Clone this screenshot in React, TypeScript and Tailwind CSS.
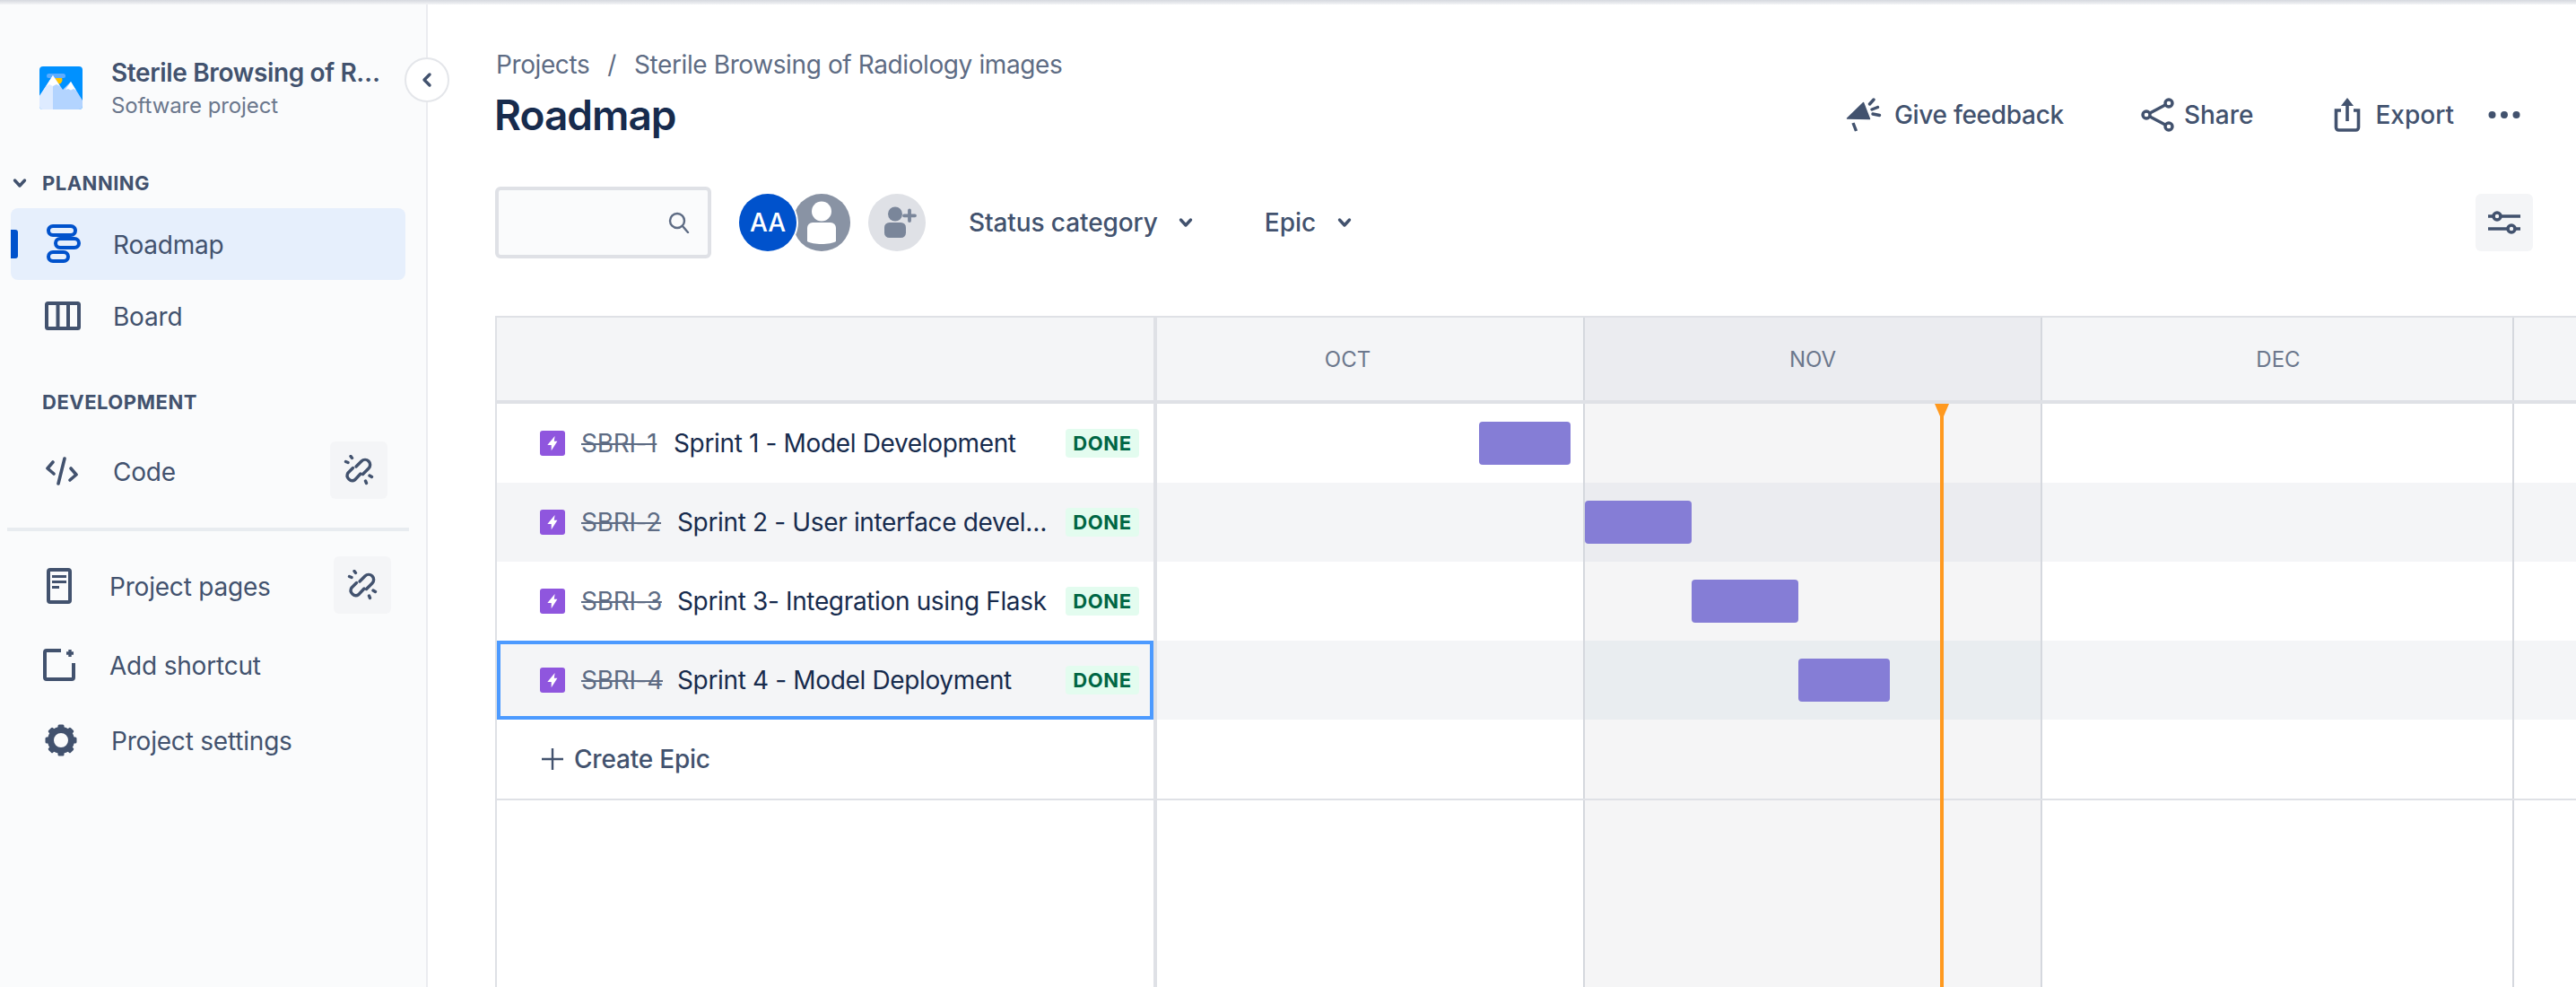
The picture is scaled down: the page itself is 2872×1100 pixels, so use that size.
import React from "react";

const Logo = () => (
  <svg width="48" height="48" viewBox="0 0 48 48" className="shrink-0">
    <rect width="48" height="48" rx="4" fill="#0091ff" />
    <circle cx="21" cy="15" r="4.5" fill="#ffc400" />
    <rect x="8" y="8" width="21" height="5" rx="2.5" fill="#5cadff" />
    <path d="M0 33 L15 10 L26 26 L35 17 L48 38 V44 A4 4 0 0 1 44 48 H4 A4 4 0 0 1 0 44 Z" fill="#b3d4ff" />
    <path d="M0 33 L15 10 V48 H4 A4 4 0 0 1 0 44 Z" fill="#deebff" />
    <path d="M7.5 22 L15 10 L23 22 L19 20 L15 22 L11 20 Z M29 26 L35 17 L41 27 L38 25 L35 26.5 L32 25 Z" fill="#ffffff" />
  </svg>
);
const RoadmapIcon = () => (
  <svg width="40" height="44" viewBox="0 0 40 44" fill="none" stroke="#0052cc" strokeWidth="4" className="shrink-0">
    <rect x="4" y="2" width="30" height="10" rx="5" />
    <rect x="12" y="16" width="26" height="10" rx="5" />
    <rect x="4" y="31" width="22" height="10" rx="5" />
  </svg>
);
const BoardIcon = () => (
  <svg width="40" height="32" viewBox="0 0 40 32" fill="none" stroke="#42526e" strokeWidth="4" className="shrink-0">
    <rect x="2" y="2" width="36" height="28" rx="1.5" />
    <path d="M14.5 2 V30 M26 2 V30" />
  </svg>
);
const CodeIcon = () => (
  <svg width="36" height="32" viewBox="0 0 36 32" fill="none" stroke="#42526e" strokeWidth="3.6" strokeLinecap="round" strokeLinejoin="round" className="shrink-0">
    <path d="M8 6 L2 13 L9 19 M28 13 L34 20 L27 26 M21 2 L14 30" />
  </svg>
);
const BrokenLink = () => (
  <svg width="34" height="34" viewBox="0 0 34 34" fill="none" stroke="#42526e" strokeWidth="3.4" strokeLinecap="round">
    <path d="M14 13 L20 7 A5.6 5.6 0 0 1 28 15 L21.5 21.5" />
    <path d="M10.5 14.5 L5 20 A5.6 5.6 0 0 0 13 27.5 L19 21" />
    <path d="M8 1.5 L9.5 3.5 M2.5 7.5 L5 8.5 M29 23 L31.5 24.5 M24.5 29 L25.5 31.5" />
  </svg>
);
const PageIcon = () => (
  <svg width="28" height="40" viewBox="0 0 28 40" fill="none" className="shrink-0">
    <rect x="2" y="2" width="24" height="36" rx="2" stroke="#42526e" strokeWidth="4" />
    <rect x="6" y="8" width="16" height="3" fill="#42526e" />
    <rect x="6" y="14" width="16" height="3" fill="#42526e" />
    <rect x="6" y="20" width="8" height="3" fill="#42526e" />
  </svg>
);
const ShortcutIcon = () => (
  <svg width="36" height="36" viewBox="0 0 36 36" fill="none" stroke="#42526e" className="shrink-0">
    <path d="M20 2 H4 A2 2 0 0 0 2 4 V32 A2 2 0 0 0 4 34 H32 A2 2 0 0 0 34 32 V16" strokeWidth="4" />
    <path d="M30 1 V9 M26 5 H34" strokeWidth="3.4" />
  </svg>
);
const GearIcon = () => (
  <svg width="36" height="36" viewBox="0 0 36 36" className="shrink-0">
    <circle cx="18" cy="18" r="11.5" fill="none" stroke="#42526e" strokeWidth="7" />
    {[0, 45, 90, 135, 180, 225, 270, 315].map((a) => (
      <rect key={a} x="14.5" y="0.5" width="7" height="6" rx="1.5" fill="#42526e" transform={`rotate(${a} 18 18)`} />
    ))}
  </svg>
);
const Megaphone = () => (
  <svg width="40" height="38" viewBox="0 0 40 38" fill="none" className="shrink-0">
    <path d="M1.5 23 L19.5 5.5 L26.5 23.5 Z" fill="#42526e" stroke="#42526e" strokeWidth="1.5" strokeLinejoin="round" />
    <path d="M8 28 L11.5 37" stroke="#42526e" strokeWidth="3.4" />
    <path d="M26.5 7 L31 2 M29 13 L35.5 10.5 M30 18 L37.5 19.5" stroke="#42526e" strokeWidth="3.4" strokeLinecap="round" />
  </svg>
);
const ShareIcon = () => (
  <svg width="38" height="38" viewBox="0 0 38 38" fill="none" stroke="#42526e" strokeWidth="3.4" className="shrink-0">
    <circle cx="31" cy="6" r="4" />
    <circle cx="6" cy="19" r="4" />
    <circle cx="31" cy="32" r="4" />
    <path d="M10 17 L27 8 M10 21 L27 30" />
  </svg>
);
const ExportIcon = () => (
  <svg width="30" height="38" viewBox="0 0 30 38" fill="none" stroke="#42526e" strokeWidth="3.6" className="shrink-0">
    <path d="M8 14 H2.5 V33 A3 3 0 0 0 5.5 36 H24.5 A3 3 0 0 0 27.5 33 V14 H22" />
    <path d="M15 26 V4" />
    <path d="M15 0 L22 9 H8 Z" fill="#42526e" stroke="none" />
  </svg>
);
const Dots = () => (
  <svg width="36" height="10" viewBox="0 0 36 10" fill="#42526e" className="shrink-0">
    <circle cx="4.5" cy="5" r="4" /><circle cx="18" cy="5" r="4" /><circle cx="31.5" cy="5" r="4" />
  </svg>
);
const SlidersIcon = () => (
  <svg width="36" height="28" viewBox="0 0 36 28" fill="none" stroke="#42526e" className="shrink-0">
    <path d="M0 7 H36 M0 21 H36" strokeWidth="3.6" />
    <circle cx="10" cy="7" r="4" fill="#f4f5f7" strokeWidth="3.6" />
    <circle cx="26" cy="21" r="4" fill="#f4f5f7" strokeWidth="3.6" />
  </svg>
);
const SearchIcon = () => (
  <svg width="24" height="24" viewBox="0 0 24 24" fill="none" stroke="#5e6c84" strokeWidth="2.4" strokeLinecap="round">
    <circle cx="10" cy="10" r="8" />
    <path d="M16 16 L22 23" />
  </svg>
);
const Chevron = ({ size = 16, color = "#42526e" }: { size?: number; color?: string }) => (
  <svg width={size} height={size} viewBox="0 0 16 16" fill="none" stroke={color} strokeWidth="3.4" strokeLinecap="round" strokeLinejoin="round" className="shrink-0">
    <path d="M2.5 5 L8 11 L13.5 5" />
  </svg>
);
const PersonAvatar = () => (
  <svg width="64" height="64" viewBox="0 0 64 64" className="shrink-0 -ml-[4px]">
    <circle cx="32" cy="32" r="32" fill="#8993a4" />
    <circle cx="32" cy="19.5" r="11" fill="#ffffff" />
    <path d="M16 38 A6 6 0 0 1 22 32 H42 A6 6 0 0 1 48 38 V53 C42 57 22 57 16 53 Z" fill="#ffffff" />
  </svg>
);
const AddPerson = () => (
  <svg width="64" height="64" viewBox="0 0 64 64" className="shrink-0">
    <circle cx="32" cy="32" r="32" fill="#dfe1e6" />
    <circle cx="30" cy="22.5" r="8" fill="#7a869a" />
    <rect x="18" y="32" width="24" height="17" rx="5.5" fill="#7a869a" />
    <path d="M46 18.5 V30 M40 24.3 H52" stroke="#7a869a" strokeWidth="3.8" strokeLinecap="round" />
  </svg>
);
const EpicIcon = () => (
  <svg width="28" height="28" viewBox="0 0 28 28" className="shrink-0">
    <rect width="28" height="28" rx="3" fill="#8f56de" />
    <path d="M16.6 6 L8.3 16 H12.7 V22.3 L19.4 11.7 H15.8 Z" fill="#ffffff" />
  </svg>
);

const NavItem = ({ icon, iconBox, label, action, className }: { icon: React.ReactNode; iconBox: string; label: string; action?: React.ReactNode; className: string }) => (
  <div className={`flex h-[80px] items-center ${className}`}>
    <div className={`flex items-center justify-center ${iconBox}`}>{icon}</div>
    <span className="mt-[2px] flex-1 text-[28px] tracking-[-0.2px] text-[#42526e]">{label}</span>
    {action}
  </div>
);
const LinkButton = ({ className }: { className: string }) => (
  <div className={`-mt-[2px] flex h-[64px] w-[64px] items-center justify-center rounded-[6px] bg-[#f4f5f7] ${className}`}>
    <BrokenLink />
  </div>
);

const epics = [
  { key: "SBRI-1", keyW: "w-[103px]", title: "Sprint 1 - Model Development", cell: 0, bar: "", alt: false, sel: false },
  { key: "SBRI-2", keyW: "w-[107px]", title: "Sprint 2 - User interface development", cell: 1, bar: "ml-0 w-[119px]", alt: true, sel: false },
  { key: "SBRI-3", keyW: "w-[107px]", title: "Sprint 3- Integration using Flask", cell: 1, bar: "ml-[119px] w-[119px]", alt: false, sel: false },
  { key: "SBRI-4", keyW: "w-[107px]", title: "Sprint 4 - Model Deployment", cell: 1, bar: "ml-[238px] w-[102px]", alt: true, sel: true },
];

const COLS = "grid grid-cols-[738px_477px_510px_526px_1fr]";

export default function App() {
  return (
    <div className="relative flex h-[1100px] w-[2872px] flex-col overflow-hidden bg-white font-['Inter',sans-serif]">
      <div className="h-[5px] shrink-0 bg-gradient-to-b from-[#d5d8de] to-[#f3f4f6]" />
      <div className="flex min-h-0 flex-1">
        <aside className="relative w-[477px] shrink-0 border-r-2 border-[#ebecf0] bg-[#fafbfc]">
          <div className="mt-[53px] flex h-[80px] items-center pl-[44px]">
            <Logo />
            <div className="ml-[32px] mt-[3px] w-[304px]">
              <div className="truncate text-[28px] font-semibold leading-[36px] tracking-[-0.35px] text-[#42526e]">Sterile Browsing of Radiology images</div>
              <div className="mt-[1px] text-[24px] leading-[36px] tracking-[-0.1px] text-[#6b778c]">Software project</div>
            </div>
          </div>
          <div className="absolute left-[451px] top-[59px] flex h-[50px] w-[50px] items-center justify-center rounded-full border-2 border-[#e4e6ea] bg-white">
            <svg width="16" height="18" viewBox="0 0 16 18" fill="none" stroke="#42526e" strokeWidth="3.4" strokeLinecap="round" strokeLinejoin="round"><path d="M11 3 L5 9 L11 15" /></svg>
          </div>
          <div className="mt-[50px] flex h-[32px] items-center pl-[14px] text-[22px] font-bold leading-[32px] tracking-[0.5px] text-[#42526e]">
            <Chevron size={16} />
            <span className="ml-[17px]">PLANNING</span>
          </div>
          <div className="relative ml-[12px] mt-[12px] flex h-[80px] w-[440px] items-center rounded-[8px] bg-[#e6effc]">
            <div className="absolute left-0 top-[24px] h-[32px] w-[8px] rounded-r-[3px] bg-[#0052cc]" />
            <div className="ml-[38px] flex w-[76px] items-center"><RoadmapIcon /></div>
            <span className="mt-[2px] text-[28px] tracking-[-0.2px] text-[#42526e]">Roadmap</span>
          </div>
          <NavItem className="" iconBox="ml-[50px] w-[76px] justify-start" icon={<BoardIcon />} label="Board" />
          <div className="mt-[40px] h-[32px] pl-[47px] text-[22px] font-bold leading-[32px] tracking-[0.5px] text-[#42526e]">DEVELOPMENT</div>
          <NavItem className="mt-[21px]" iconBox="ml-[51px] w-[75px] justify-start" icon={<CodeIcon />} label="Code" action={<LinkButton className="mr-[43px]" />} />
          <div className="ml-[8px] mt-[23px] h-[4px] w-[448px] bg-[#e8ecf0]" />
          <NavItem className="mt-[21px]" iconBox="ml-[52px] w-[70px] justify-start" icon={<PageIcon />} label="Project pages" action={<LinkButton className="mr-[39px]" />} />
          <NavItem className="mt-[8px]" iconBox="ml-[48px] w-[74px] justify-start" icon={<ShortcutIcon />} label="Add shortcut" />
          <NavItem className="mt-[4px]" iconBox="ml-[50px] w-[74px] justify-start" icon={<GearIcon />} label="Project settings" />
        </aside>

        <main className="flex min-w-0 flex-1 flex-col pl-[76px]">
          <div className="mt-[49px] flex h-[36px] items-center text-[28px] leading-[36px] tracking-[-0.4px] text-[#5e6c84]">
            <span>Projects</span>
            <span className="mx-[20px]">/</span>
            <span>Sterile Browsing of Radiology images</span>
          </div>
          <div className="mt-[10px] flex h-[56px] items-center justify-between pr-[62px]">
            <h1 className="-ml-[2px] text-[46px] font-semibold leading-[56px] tracking-[-1px] text-[#172b4d]">Roadmap</h1>
            <div className="flex items-center text-[28px] font-medium text-[#42526e]">
              <Megaphone />
              <span className="ml-[14px] tracking-[-0.3px]">Give feedback</span>
              <span className="ml-[86px]"><ShareIcon /></span>
              <span className="ml-[10px]">Share</span>
              <span className="ml-[90px]"><ExportIcon /></span>
              <span className="ml-[16px]">Export</span>
              <span className="ml-[38px]"><Dots /></span>
            </div>
          </div>
          <div className="mt-[52px] flex h-[80px] items-center pr-[48px]">
            <div className="-ml-[1px] flex h-[80px] w-[241px] items-center justify-end rounded-[6px] border-4 border-[#dfe1e6] bg-[#fafbfc] pr-[20px]">
              <SearchIcon />
            </div>
            <div className="relative z-10 ml-[31px] flex h-[64px] w-[64px] shrink-0 items-center justify-center rounded-full bg-[#0052cc] text-[28px] font-medium text-white ring-2 ring-white">AA</div>
            <PersonAvatar />
            <span className="ml-[20px]"><AddPerson /></span>
            <span className="ml-[48px] text-[28px] font-medium tracking-[-0.1px] text-[#42526e]">Status category</span>
            <span className="ml-[23px]"><Chevron size={16} /></span>
            <span className="ml-[80px] text-[28px] font-medium text-[#42526e]">Epic</span>
            <span className="ml-[24px]"><Chevron size={16} /></span>
            <div className="ml-auto flex h-[64px] w-[64px] items-center justify-center rounded-[6px] bg-[#f4f5f7]">
              <SlidersIcon />
            </div>
          </div>

          <div className="relative -ml-[1px] mt-[64px] flex min-h-0 flex-1 flex-col border-t-2 border-[#dfe1e6]">
            <div className={`${COLS} h-[96px] border-b-4 border-[#dfe1e6] text-[24px] text-[#6b778c]`}>
              <div className="border-l-2 border-r-4 border-[#dfe1e6] bg-[#f4f5f7]" />
              <div className="flex items-center justify-center border-r-2 border-[#d5d8de] bg-[#f4f5f7] pr-[50px] pt-[2px]">OCT</div>
              <div className="flex items-center justify-center border-r-2 border-[#d5d8de] bg-[#ebecf0] pt-[2px]">NOV</div>
              <div className="flex items-center justify-center border-r-2 border-[#d5d8de] bg-[#f4f5f7] pl-[2px] pt-[2px]">DEC</div>
              <div className="bg-[#f4f5f7]" />
            </div>
            {epics.map((e, i) => (
              <div key={e.key} className={`${COLS} h-[88px]`}>
                <div className={`border-l-2 border-r-4 border-[#dfe1e6] ${e.alt ? "bg-[#f4f5f7]" : "bg-white"}`}>
                  <div className={`flex h-full items-center ${e.sel ? "border-4 border-[#4c9aff] pl-[44px] pr-[12px]" : "pl-[48px] pr-[16px]"}`}>
                    <EpicIcon />
                    <span className={`ml-[18px] shrink-0 text-[28px] tracking-[-0.3px] text-[#5e6c84] line-through decoration-2 ${e.keyW}`}>{e.key}</span>
                    <span className="min-w-0 flex-1 truncate pr-[8px] text-[28px] tracking-[-0.35px] text-[#172b4d]">{e.title}</span>
                    <span className="flex h-[32px] w-[82px] shrink-0 items-center justify-center rounded-[4px] bg-[#e3fcef] text-[22px] font-bold tracking-[0.6px] text-[#006644]">DONE</span>
                  </div>
                </div>
                <div className={`flex items-center justify-end border-r-2 border-[#d5d8de] pr-[14px] ${e.alt ? "bg-[#f4f5f7]" : "bg-white"}`}>
                  {i === 0 && <div className="h-[48px] w-[102px] rounded-[4px] bg-[#857dd6]" />}
                </div>
                <div className={`flex items-center border-r-2 border-[#d5d8de] ${e.sel ? "bg-[#e9edf0]" : e.alt ? "bg-[#ebecf0]" : "bg-[#f5f5f6]"}`}>
                  {e.cell === 1 && <div className={`h-[48px] rounded-[4px] bg-[#857dd6] ${e.bar}`} />}
                </div>
                <div className={`border-r-2 border-[#d5d8de] ${e.alt ? "bg-[#f4f5f7]" : "bg-white"}`} />
                <div className={e.alt ? "bg-[#f4f5f7]" : "bg-white"} />
              </div>
            ))}
            <div className={`${COLS} h-[90px] border-b-2 border-[#dfe1e6]`}>
              <div className="flex items-center border-l-2 border-r-4 border-[#dfe1e6] pl-[49px] text-[28px] font-medium tracking-[-0.2px] text-[#42526e]">
                <svg width="26" height="26" viewBox="0 0 26 26" stroke="#42526e" strokeWidth="2.4" className="shrink-0"><path d="M13 1 V25 M1 13 H25" /></svg>
                <span className="ml-[11px]">Create Epic</span>
              </div>
              <div className="border-r-2 border-[#d5d8de]" />
              <div className="border-r-2 border-[#d5d8de] bg-[#f5f5f6]" />
              <div className="border-r-2 border-[#d5d8de]" />
              <div />
            </div>
            <div className={`${COLS} flex-1`}>
              <div className="border-l-2 border-r-4 border-[#dfe1e6]" />
              <div className="border-r-2 border-[#d5d8de]" />
              <div className="border-r-2 border-[#d5d8de] bg-[#f5f5f6]" />
              <div className="border-r-2 border-[#d5d8de]" />
              <div />
            </div>
            <div className="absolute bottom-0 left-[1611px] top-[96px] w-[4px] bg-[#ff991f]">
              <svg width="16" height="14" viewBox="0 0 16 14" className="absolute -left-[6px] top-0"><path d="M0 0 H16 L10 14 H6 Z" fill="#ff991f" /></svg>
            </div>
          </div>
        </main>
      </div>
    </div>
  );
}
